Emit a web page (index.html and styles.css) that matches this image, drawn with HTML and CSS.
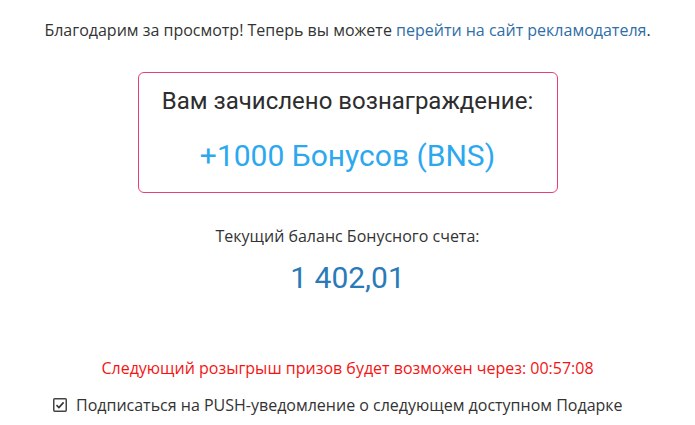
FILE: index.html
```html
<!DOCTYPE html>
<html lang="ru">
<head>
<meta charset="utf-8">
<link rel="stylesheet" href="styles.css">
</head>
<body>
<div class="page">
  <p class="thanks">Благодарим за просмотр! Теперь вы можете <a href="#" class="link">перейти на сайт рекламодателя</a>.</p>
  <div class="reward">
    <div class="reward-title">Вам зачислено вознаграждение:</div>
    <div class="reward-amount">+1000 Бонусов (BNS)</div>
  </div>
  <div class="balance-label">Текущий баланс Бонусного счета:</div>
  <div class="balance">1 402,01</div>
  <div class="next">Следующий розыгрыш призов будет возможен через: 00:57:08</div>
  <label class="subscribe">
    <span class="check">
      <svg width="14" height="14" viewBox="0 0 14 14"><rect x="0.75" y="0.75" width="12.5" height="12.5" rx="1" fill="#fff" stroke="#444" stroke-width="1.5"/><path d="M3.5 7.2 L5.9 9.5 L10.6 4.4" fill="none" stroke="#333" stroke-width="1.6"/></svg>
    </span>
    <span>Подписаться на PUSH-уведомление о следующем доступном Подарке</span>
  </label>
</div>
</body>
</html>
```
FILE: styles.css
```css
html, body { margin: 0; padding: 0; background: #fff; }
.page {
  width: 695px;
  font-family: "Open Sans", sans-serif;
  color: #333;
  display: flex;
  flex-direction: column;
  align-items: center;
}
.thanks {
  margin: 19px 0 0;
  font-size: 16px;
  line-height: 22px;
}
.link { color: #2f6ea6; text-decoration: none; }
.reward {
  margin-top: 31px;
  width: 420px;
  height: 121px;
  box-sizing: border-box;
  border: 1px solid #e83e7c;
  border-radius: 6px;
  display: flex;
  flex-direction: column;
  align-items: center;
  font-family: Roboto, sans-serif;
}
.reward-title {
  margin-top: 13px;
  font-size: 24px;
  line-height: 30px;
  color: #2d2d2d;
}
.reward-amount {
  margin-top: 22px;
  font-size: 30px;
  line-height: 36px;
  color: #2ca8ef;
}
.balance-label {
  margin-top: 32px;
  font-size: 16px;
  line-height: 22px;
}
.balance {
  margin-top: 12px;
  font-family: Roboto, sans-serif;
  font-size: 30px;
  line-height: 38px;
  color: #2a7ab8;
}
.next {
  margin-top: 60px;
  font-size: 16px;
  line-height: 22px;
  color: #f41414;
}
.subscribe {
  margin-top: 15px;
  align-self: flex-start;
  margin-left: 53px;
  display: flex;
  align-items: center;
  gap: 9px;
  font-size: 16px;
  line-height: 22px;
}
.check { display: flex; }
```
